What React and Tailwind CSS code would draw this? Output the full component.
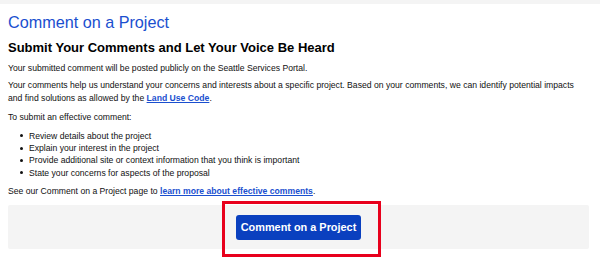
export default function App() {
  const font = { fontFamily: '"Liberation Sans", Arial, sans-serif' };
  return (
    <div className="relative w-[600px] h-[266px] bg-white overflow-hidden text-[#111]" style={font}>
      <div className="h-[4px] bg-[#f4f4f4]" />
      <div className="px-[8px]">
        <h1 className="mt-[8px] text-[16.2px] leading-[20px] text-[#1a4fcf] font-normal">Comment on a Project</h1>
        <h2 className="mt-[8px] text-[13px] leading-[16px] font-bold text-black">
          Submit Your Comments and Let Your Voice Be Heard
        </h2>
        <p className="mt-[6px] text-[8.64px] leading-[12.4px]">
          Your submitted comment will be posted publicly on the Seattle Services Portal.
        </p>
        <p className="mt-[5px] text-[8.64px] leading-[12.4px] w-[575px]">
          Your comments help us understand your concerns and interests about a specific project. Based on your comments, we can identify potential impacts and find solutions as allowed by the{" "}
          <a href="#" className="font-bold text-[#1a4fcf] underline">Land Use Code</a>.
        </p>
        <p className="mt-[6.5px] text-[8.64px] leading-[12.4px]">To submit an effective comment:</p>
        <ul className="mt-[6.5px] text-[8.64px] leading-[12.3px]">
          {[
            "Review details about the project",
            "Explain your interest in the project",
            "Provide additional site or context information that you think is important",
            "State your concerns for aspects of the proposal",
          ].map((t) => (
            <li key={t} className="flex items-center">
              <span className="ml-[12px] mr-[6px] w-[3px] h-[3px] rounded-full bg-[#111]" />
              <span>{t}</span>
            </li>
          ))}
        </ul>
        <p className="mt-[6.5px] text-[8.64px] leading-[12.4px]">
          See our Comment on a Project page to{" "}
          <a href="#" className="font-bold text-[#1a4fcf] underline">learn more about effective comments</a>.
        </p>
        <div className="mt-[7px] w-[581px] h-[44px] bg-[#f4f4f4] rounded-[2px] flex items-start justify-center pt-[10px]">
          <button className="h-[25px] px-[5px] rounded-[3px] bg-[#0a40bf] text-white font-bold text-[10.9px] leading-[25px]">
            Comment on a Project
          </button>
        </div>
      </div>
      <div className="absolute left-[222px] top-[201px] w-[159px] h-[56px] border-[3px] border-[#e8001c]" />
    </div>
  );
}
